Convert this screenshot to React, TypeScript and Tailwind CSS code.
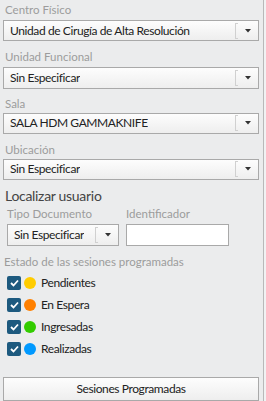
import React from "react";

const font = { fontFamily: 'Lato, "Noto Sans", sans-serif' };

function Arrow() {
  return (
    <span className="ml-auto flex h-full shrink-0 items-center gap-[7px] pr-[7px]">
      <span className="h-[16px] w-[3px] border border-r-0 border-[#d0d0d0]" />
      <svg width="6" height="4" viewBox="0 0 6 4">
        <path d="M0 0h6L3 3.5z" fill="#333" />
      </svg>
    </span>
  );
}

function Select({ value, className = "" }: { value: string; className?: string }) {
  return (
    <div
      className={`flex h-[22px] items-center border border-[#a9a9a9] bg-gradient-to-b from-[#fdfdfd] to-[#eeeeee] pl-[6px] text-[12px] tracking-[-0.4px] text-[#222] ${className}`}
    >
      <span className="truncate">{value}</span>
      <Arrow />
    </div>
  );
}

function Label({ children }: { children: React.ReactNode }) {
  return <div className="text-[11.5px] leading-[14px] text-[#9c9c9c]">{children}</div>;
}

const estados = [
  { label: "Pendientes", color: "bg-[#ffcc00]" },
  { label: "En Espera", color: "bg-[#ff8000]" },
  { label: "Ingresadas", color: "bg-[#33cc00]" },
  { label: "Realizadas", color: "bg-[#0099ff]" },
];

export default function App() {
  return (
    <div className="flex h-[401px] w-[266px] overflow-hidden bg-[#f1f2f3]" style={font}>
      <div className="flex w-[264px] flex-col border-r border-[#b9b9b9] bg-[#ebeced] pl-[3px] pr-[4px]">
        <div className="pl-[2px] pt-[3px]">
          <Label>Centro Físico</Label>
        </div>
        <Select className="mt-[3px]" value="Unidad de Cirugía de Alta Resolución" />
        <div className="mt-[9px] pl-[2px]">
          <Label>Unidad Funcional</Label>
        </div>
        <Select className="mt-[3px]" value="Sin Especificar" />
        <div className="mt-[8px] pl-[2px]">
          <Label>Sala</Label>
        </div>
        <Select className="mt-[2px]" value="SALA HDM GAMMAKNIFE" />
        <div className="mt-[9px] pl-[2px]">
          <Label>Ubicación</Label>
        </div>
        <Select className="mt-[2px]" value="Sin Especificar" />

        <div className="mt-[7px] pl-[2px] text-[14px] leading-[18px] tracking-[-0.3px] text-[#444]">
          Localizar usuario
        </div>

        <div className="mt-[2px] flex gap-[7px] pl-[4px]">
          <div className="flex w-[112px] flex-col">
            <Label>Tipo Documento</Label>
            <Select className="mt-[3px]" value="Sin Especificar" />
          </div>
          <div className="flex w-[103px] flex-col">
            <Label>Identificador</Label>
            <div className="mt-[3px] h-[22px] border border-[#a9a9a9] bg-white" />
          </div>
        </div>

        <div className="mt-[9px] pl-[1px]">
          <Label>Estado de las sesiones programadas</Label>
        </div>

        <div className="mt-[6px] flex flex-col gap-[7px] pl-[4px]">
          {estados.map((e) => (
            <div key={e.label} className="flex h-[15px] items-center">
              <span className="flex h-[14px] w-[14px] items-center justify-center rounded-[2px] bg-[#1d5a7f]">
                <svg width="9" height="8" viewBox="0 0 9 8">
                  <path d="M1 4l2.5 2.5L8 1.5" fill="none" stroke="#fff" strokeWidth="1.8" />
                </svg>
              </span>
              <span className={`ml-[3px] h-[12px] w-[12px] rounded-full ${e.color}`} />
              <span className="ml-[5px] text-[12px] tracking-[-0.4px] text-[#222]">{e.label}</span>
            </div>
          ))}
        </div>

        <button className="mt-[21px] h-[24px] w-[256px] shrink-0 border border-[#a9a9a9] bg-gradient-to-b from-[#fdfdfd] to-[#eeeeee] text-center text-[12px] tracking-[-0.4px] text-[#222]">
          Sesiones Programadas
        </button>
      </div>
    </div>
  );
}
